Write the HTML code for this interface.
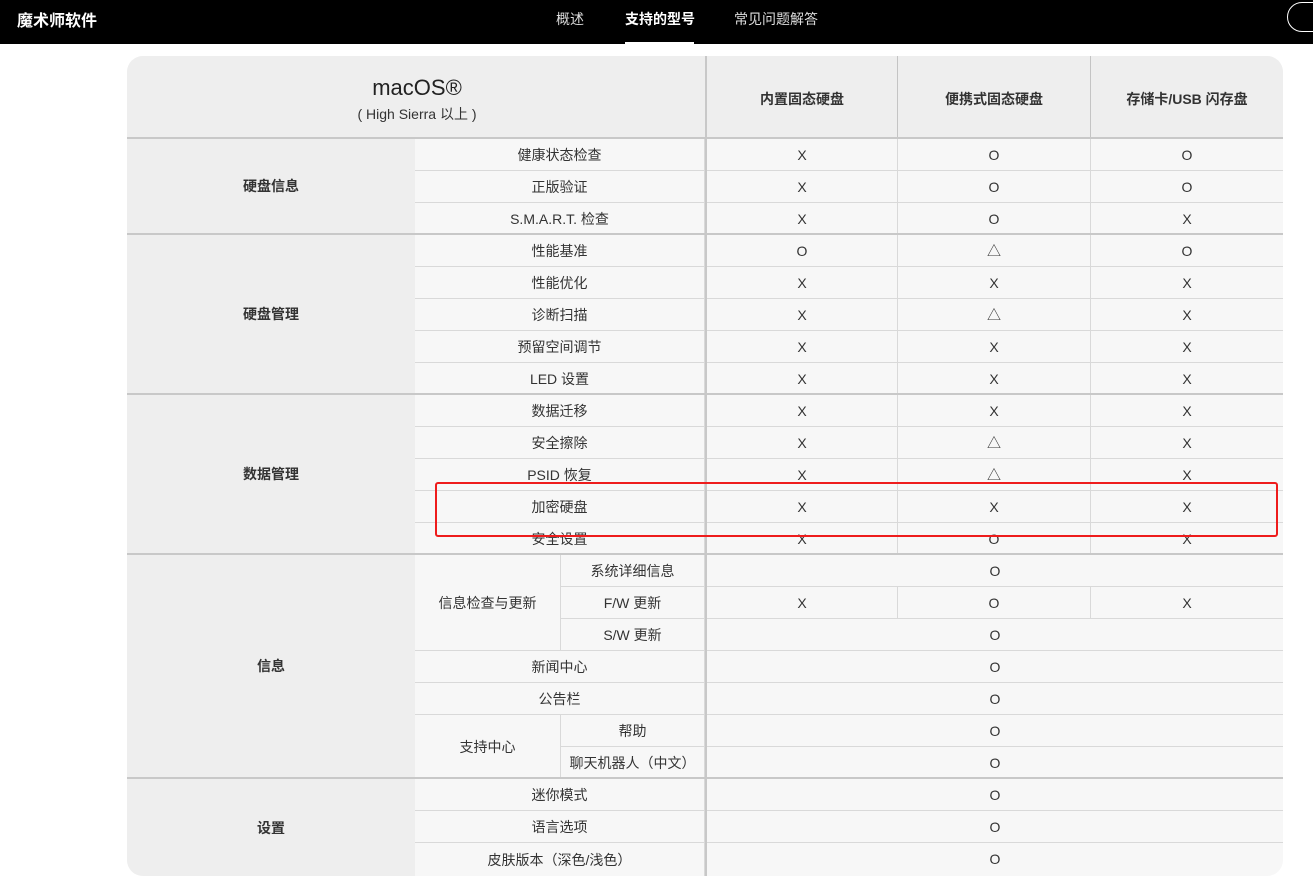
<!DOCTYPE html>
<html><head><meta charset="utf-8"><style>
*{margin:0;padding:0;box-sizing:border-box}
body{width:1313px;height:886px;background:#fff;position:relative;overflow:hidden;font-family:"Liberation Sans","Noto Sans CJK SC",sans-serif;color:#333}
.nav{position:absolute;left:0;top:0;width:1313px;height:44px;background:#000;color:#fff}
.nav span{position:absolute;top:9px;font-size:14px;color:#ddd}
.t{position:absolute;left:127px;top:56px;width:1156px;height:820px;background:#f7f7f7;border-radius:16px;overflow:hidden}
.c{position:absolute;display:flex;align-items:center;justify-content:center;font-size:14px;border-bottom:1px solid #d9d9d9;border-right:1px solid #d9d9d9;text-align:center}
.g{background:#eeeeee;font-weight:bold;border-bottom:2px solid #c8c8c8;border-right:none}
.h{background:#eeeeee;font-weight:bold;border-bottom:2px solid #c8c8c8;border-right:1px solid #c4c4c4;padding-top:4px}
.vl{position:absolute;left:578px;top:0;width:2px;height:820px;background:#c8c8c8}
.gl{position:absolute;left:288px;width:868px;height:2px;background:#c8c8c8}
</style></head><body>
<div class="nav">
<div style="position:absolute;left:17px;top:7px;font-size:16px;font-weight:bold;color:#fff">魔术师软件</div>
<span style="left:556px">概述</span>
<span style="left:625px;color:#fff;font-weight:bold">支持的型号</span>
<div style="position:absolute;left:625px;top:42px;width:69px;height:2px;background:#fff"></div>
<span style="left:734px">常见问题解答</span>
<div style="position:absolute;left:1287px;top:2px;width:60px;height:30px;border:1px solid #fff;border-radius:15px"></div>
</div>
<div class="t">
<div class="c h" style="left:0;top:0;width:580px;height:83px;flex-direction:column;border-right:none;padding-top:6px"><div style="font-size:22px;font-weight:normal;color:#222">macOS®</div><div style="font-size:14px;font-weight:normal;margin-top:3px">( High Sierra 以上 )</div></div>
<div class="c h" style="left:580px;top:0;width:191px;height:83px">内置固态硬盘</div>
<div class="c h" style="left:771px;top:0;width:193px;height:83px">便携式固态硬盘</div>
<div class="c h" style="left:964px;top:0;width:192px;height:83px;border-right:none">存储卡/USB 闪存盘</div>
<div class="c g" style="left:0;top:83px;width:288px;height:96px">硬盘信息</div>
<div class="c g" style="left:0;top:179px;width:288px;height:160px">硬盘管理</div>
<div class="c g" style="left:0;top:339px;width:288px;height:160px">数据管理</div>
<div class="c g" style="left:0;top:499px;width:288px;height:224px">信息</div>
<div class="c g" style="left:0;top:723px;width:288px;height:97px;border-bottom:none">设置</div>
<div class="c" style="left:288px;top:83px;width:290px;height:32px">健康状态检查</div>
<div class="c" style="left:288px;top:115px;width:290px;height:32px">正版验证</div>
<div class="c" style="left:288px;top:147px;width:290px;height:32px">S.M.A.R.T. 检查</div>
<div class="c" style="left:288px;top:179px;width:290px;height:32px">性能基准</div>
<div class="c" style="left:288px;top:211px;width:290px;height:32px">性能优化</div>
<div class="c" style="left:288px;top:243px;width:290px;height:32px">诊断扫描</div>
<div class="c" style="left:288px;top:275px;width:290px;height:32px">预留空间调节</div>
<div class="c" style="left:288px;top:307px;width:290px;height:32px">LED 设置</div>
<div class="c" style="left:288px;top:339px;width:290px;height:32px">数据迁移</div>
<div class="c" style="left:288px;top:371px;width:290px;height:32px">安全擦除</div>
<div class="c" style="left:288px;top:403px;width:290px;height:32px">PSID 恢复</div>
<div class="c" style="left:288px;top:435px;width:290px;height:32px">加密硬盘</div>
<div class="c" style="left:288px;top:467px;width:290px;height:32px">安全设置</div>
<div class="c" style="left:288px;top:499px;width:146px;height:96px">信息检查与更新</div>
<div class="c" style="left:434px;top:499px;width:144px;height:32px">系统详细信息</div>
<div class="c" style="left:434px;top:531px;width:144px;height:32px">F/W 更新</div>
<div class="c" style="left:434px;top:563px;width:144px;height:32px">S/W 更新</div>
<div class="c" style="left:288px;top:595px;width:290px;height:32px">新闻中心</div>
<div class="c" style="left:288px;top:627px;width:290px;height:32px">公告栏</div>
<div class="c" style="left:288px;top:659px;width:146px;height:64px">支持中心</div>
<div class="c" style="left:434px;top:659px;width:144px;height:32px">帮助</div>
<div class="c" style="left:434px;top:691px;width:144px;height:32px">聊天机器人（中文）</div>
<div class="c" style="left:288px;top:723px;width:290px;height:32px">迷你模式</div>
<div class="c" style="left:288px;top:755px;width:290px;height:32px">语言选项</div>
<div class="c" style="left:288px;top:787px;width:290px;height:33px;border-bottom:none">皮肤版本（深色/浅色）</div>
<div style="position:absolute;left:580px;top:83px;width:576px">
<style>.r{display:flex;height:32px;border-bottom:1px solid #d9d9d9}.r div{display:flex;align-items:center;justify-content:center;font-size:14px;border-right:1px solid #d9d9d9}.r div:nth-child(1){width:191px}.r div:nth-child(2){width:193px}.r div:nth-child(3){width:192px;border-right:none}.r .m{width:576px!important;border-right:none}</style>
<div class="r"><div>X</div><div>O</div><div>O</div></div>
<div class="r"><div>X</div><div>O</div><div>O</div></div>
<div class="r"><div>X</div><div>O</div><div>X</div></div>
<div class="r"><div>O</div><div>△</div><div>O</div></div>
<div class="r"><div>X</div><div>X</div><div>X</div></div>
<div class="r"><div>X</div><div>△</div><div>X</div></div>
<div class="r"><div>X</div><div>X</div><div>X</div></div>
<div class="r"><div>X</div><div>X</div><div>X</div></div>
<div class="r"><div>X</div><div>X</div><div>X</div></div>
<div class="r"><div>X</div><div>△</div><div>X</div></div>
<div class="r"><div>X</div><div>△</div><div>X</div></div>
<div class="r"><div>X</div><div>X</div><div>X</div></div>
<div class="r"><div>X</div><div>O</div><div>X</div></div>
<div class="r"><div class="m">O</div></div>
<div class="r"><div>X</div><div>O</div><div>X</div></div>
<div class="r"><div class="m">O</div></div>
<div class="r"><div class="m">O</div></div>
<div class="r"><div class="m">O</div></div>
<div class="r"><div class="m">O</div></div>
<div class="r"><div class="m">O</div></div>
<div class="r"><div class="m">O</div></div>
<div class="r"><div class="m">O</div></div>
<div class="r" style="border-bottom:none"><div class="m">O</div></div>
</div>
<div class="gl" style="top:177px"></div>
<div class="gl" style="top:337px"></div>
<div class="gl" style="top:497px"></div>
<div class="gl" style="top:721px"></div>
<div class="gl" style="top:81px;left:0;width:1156px"></div>
<div class="vl"></div>
</div>
<div style="position:absolute;left:435px;top:482px;width:843px;height:55px;border:2px solid #ee1c1c;border-radius:3px"></div>
</body></html>
